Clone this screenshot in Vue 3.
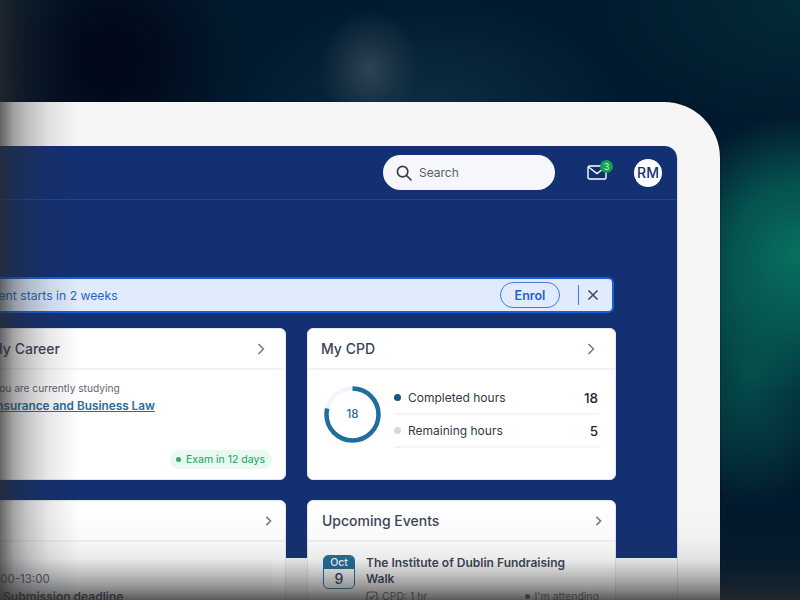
<script setup>
const cpdRows = [
  { label: 'Completed hours', value: 18, kind: 'done' },
  { label: 'Remaining hours', value: 5, kind: 'left' }
]

const ringLength = 2 * Math.PI * 26
const ringDash = `${ringLength * (18 / 23)} ${ringLength}`
</script>

<template>
  <div class="scene">
    <div class="tablet">
      <div class="screen">
        <header class="topbar">
          <div class="search">
            <svg class="search__icon" viewBox="0 0 16 16" width="16" height="16" aria-hidden="true">
              <circle cx="6.6" cy="6.6" r="5.2" />
              <path d="M10.5 10.5 15 15" />
            </svg>
            <span>Search</span>
          </div>
          <div class="mail">
            <svg viewBox="0 0 20 15" width="20" height="15" aria-hidden="true">
              <rect x="1" y="1" width="18" height="13" rx="1.5" />
              <path d="M1.5 2 10 8.5 18.5 2" />
            </svg>
            <span class="mail__badge">3</span>
          </div>
          <div class="avatar">RM</div>
        </header>

        <main class="content">
          <div class="banner">
            <span class="banner__text">Your enrolment starts in 2 weeks</span>
            <button class="banner__btn" type="button">Enrol</button>
            <span class="banner__sep"></span>
            <svg class="banner__close" viewBox="0 0 12 12" width="12" height="12" aria-hidden="true">
              <path d="M1.5 1.5 10.5 10.5M10.5 1.5 1.5 10.5" />
            </svg>
          </div>

          <div class="cards">
            <section class="card">
              <header class="card__head">
                <h2>My Career</h2>
                <svg class="chev" viewBox="0 0 8 12" width="8" height="12" aria-hidden="true"><path d="M1.5 1 6.5 6 1.5 11" /></svg>
              </header>
              <div class="career">
                <p class="career__note">You are currently studying</p>
                <a class="career__link">Insurance and Business Law</a>
                <span class="pill"><i></i>Exam in 12 days</span>
              </div>
            </section>

            <section class="card">
              <header class="card__head">
                <h2>My CPD</h2>
                <svg class="chev" viewBox="0 0 8 12" width="8" height="12" aria-hidden="true"><path d="M1.5 1 6.5 6 1.5 11" /></svg>
              </header>
              <div class="cpd">
                <div class="ring">
                  <svg viewBox="0 0 57 57" width="57" height="57" aria-hidden="true">
                    <circle class="ring__track" cx="28.5" cy="28.5" r="26" />
                    <circle class="ring__value" cx="28.5" cy="28.5" r="26" :stroke-dasharray="ringDash" />
                  </svg>
                  <span>18</span>
                </div>
                <ul class="cpd__list">
                  <li v-for="row in cpdRows" :key="row.label">
                    <i :class="row.kind"></i>
                    <span class="cpd__label">{{ row.label }}</span>
                    <b>{{ row.value }}</b>
                  </li>
                </ul>
              </div>
            </section>

            <section class="card card--lower">
              <header class="card__head card__head--end">
                <svg class="chev" viewBox="0 0 8 12" width="8" height="12" aria-hidden="true"><path d="M1.5 1 6.5 6 1.5 11" /></svg>
              </header>
              <div class="deadline">
                <p class="deadline__time">10:00-13:00</p>
                <p class="deadline__name">Submission deadline</p>
              </div>
            </section>

            <section class="card card--lower">
              <header class="card__head">
                <h2>Upcoming Events</h2>
                <svg class="chev" viewBox="0 0 8 12" width="8" height="12" aria-hidden="true"><path d="M1.5 1 6.5 6 1.5 11" /></svg>
              </header>
              <div class="event">
                <div class="date">
                  <span class="date__month">Oct</span>
                  <span class="date__day">9</span>
                </div>
                <div class="event__body">
                  <p class="event__title">The Institute of Dublin Fundraising Walk</p>
                  <div class="event__meta">
                    <span class="event__cpd">
                      <svg viewBox="0 0 12 12" width="12" height="12" aria-hidden="true">
                        <rect x="1" y="1" width="10" height="10" rx="2.5" />
                        <path d="M3.5 6 5.4 7.8 8.6 4.2" />
                      </svg>
                      CPD: 1 hr
                    </span>
                    <span class="event__going"><i></i>I'm attending</span>
                  </div>
                </div>
              </div>
            </section>
          </div>
        </main>
      </div>
    </div>

    <div class="fade fade--left" aria-hidden="true"></div>
    <div class="fade fade--bottom" aria-hidden="true"></div>
  </div>
</template>

<style>
html,
body {
  margin: 0;
  background: #021a2b;
}
</style>

<style scoped>
* {
  box-sizing: border-box;
}

.scene {
  position: relative;
  width: 800px;
  height: 600px;
  padding-top: 102px;
  overflow: hidden;
  font-family: Inter, 'Liberation Sans', sans-serif;
  background:
    radial-gradient(ellipse 50px 60px at 370px 70px, rgba(56, 74, 90, 0.8), rgba(45, 65, 82, 0.4) 55%, transparent 100%),
    radial-gradient(ellipse 190px 110px at 430px 110px, rgba(24, 62, 82, 0.55), transparent 100%),
    radial-gradient(ellipse 130px 140px at 795px 255px, #08705f 0%, rgba(6, 100, 90, 0.75) 50%, transparent 100%),
    radial-gradient(ellipse 95px 130px at 750px 375px, rgba(5, 85, 80, 0.85) 0%, rgba(5, 85, 80, 0.4) 60%, transparent 100%),
    radial-gradient(ellipse 130px 130px at 110px 60px, #01091a 20%, transparent 100%),
    radial-gradient(ellipse 200px 120px at 800px 0, #032b38 0%, transparent 100%),
    #021a2d;
}

.tablet {
  width: 840px;
  height: 560px;
  margin-left: -120px;
  padding: 44px 42px 0 40px;
  border-radius: 0 56px 0 0;
  background: #f6f6f7;
  box-shadow: 0 0 2px rgba(0, 0, 0, 0.5);
}

.screen {
  height: 100%;
  border-right: 1px solid #d9dde8;
  border-radius: 0 13px 0 0;
  background: linear-gradient(#133072 412px, transparent 412px);
}

.topbar {
  display: flex;
  align-items: center;
  justify-content: flex-end;
  height: 54px;
  padding-right: 15px;
  border-bottom: 1px solid #1d4595;
}

.search {
  display: flex;
  align-items: center;
  gap: 7px;
  width: 172px;
  height: 35px;
  margin-right: 32px;
  padding-left: 13px;
  border-radius: 18px;
  background: #f6f7fa;
  color: #555e6e;
  font-size: 12px;
  line-height: 14px;
}

.search__icon {
  fill: none;
  stroke: #3a3f48;
  stroke-width: 1.7;
  stroke-linecap: round;
}

.mail {
  position: relative;
  display: flex;
  width: 20px;
  margin-right: 27px;
}

.mail svg {
  fill: none;
  stroke: #fff;
  stroke-width: 1.4;
}

.mail__badge {
  position: absolute;
  top: -5px;
  right: -6px;
  width: 13px;
  height: 13px;
  border-radius: 50%;
  background: #12a150;
  color: #d8f5e4;
  font-size: 9px;
  line-height: 13px;
  text-align: center;
}

.avatar {
  width: 28px;
  height: 28px;
  border-radius: 50%;
  background: #fff;
  color: #133072;
  font-size: 14px;
  font-weight: 500;
  line-height: 28px;
  text-align: center;
}

.content {
  padding: 77px 61px 0 56px;
}

.banner {
  display: flex;
  align-items: center;
  height: 36px;
  margin: 0 2px 15px -51px;
  padding-right: 13px;
  border: 2px solid #1a5fd6;
  border-radius: 6px;
  background: #e1ebfd;
  color: #2563c4;
  font-size: 12.2px;
}

.banner__text {
  flex: 1;
  padding-left: 2px;
}

.banner__btn {
  width: 60px;
  height: 26px;
  padding: 0;
  border: 1px solid #3b7de0;
  border-radius: 13px;
  background: transparent;
  color: #2563c4;
  font: 600 12.5px Inter, 'Liberation Sans', sans-serif;
}

.banner__sep {
  width: 1px;
  height: 20px;
  margin: 0 8px 0 18px;
  background: #3b7de0;
}

.banner__close {
  fill: none;
  stroke: #434b5a;
  stroke-width: 1.6;
}

.cards {
  display: grid;
  grid-template-columns: 310px 309px;
  grid-auto-rows: 152px;
  gap: 20px 21px;
}

.card {
  border: 1px solid #e3e7f0;
  border-radius: 6px;
  background: #fff;
}

.card__head {
  display: flex;
  align-items: center;
  justify-content: space-between;
  height: 41px;
  padding: 0 20px 0 13px;
  border-bottom: 2px solid #f1f3f9;
}

.card__head--end {
  justify-content: flex-end;
}

.card__head h2 {
  margin: 0;
  color: #3b4557;
  font-size: 14px;
  font-weight: 500;
}

.card--lower .card__head {
  padding: 0 13px 0 14px;
}

.chev {
  fill: none;
  stroke: #6f7a8e;
  stroke-width: 1.5;
}

.card--lower .chev {
  width: 7px;
  height: 10px;
  stroke-width: 1.9;
}

.career {
  display: flex;
  flex-direction: column;
  padding: 11px 13px 0 16px;
}

.career__note {
  margin: 0 0 3px;
  color: #5d6675;
  font-size: 10.2px;
  line-height: 14px;
}

.career__link {
  align-self: flex-start;
  color: #2a6d98;
  font-size: 11.8px;
  font-weight: 600;
  line-height: 16px;
  text-decoration: underline;
  text-decoration-thickness: 1px;
}

.pill {
  display: flex;
  align-items: center;
  align-self: flex-end;
  gap: 5px;
  height: 19px;
  margin-top: 36px;
  padding: 0 7px 0 6px;
  border-radius: 10px;
  background: #e8f9f0;
  color: #1f9d61;
  font-size: 10.5px;
}

.pill i {
  width: 5px;
  height: 5px;
  border-radius: 50%;
  background: #1fb56b;
}

.cpd {
  display: flex;
  gap: 13px;
  padding: 16px 16px 0 16px;
}

.ring {
  position: relative;
  flex: none;
  width: 57px;
  height: 57px;
}

.ring svg {
  display: block;
  transform: rotate(-90deg);
  fill: none;
  stroke-width: 4.5;
}

.ring__track {
  stroke: #f2f5fb;
}

.ring__value {
  stroke: #1f6f9c;
}

.ring span {
  position: absolute;
  inset: 0;
  color: #2b6a94;
  font-size: 11.5px;
  font-weight: 500;
  line-height: 57px;
  text-align: center;
}

.cpd__list {
  flex: 1;
  margin: -4px 0 0;
  padding: 0;
  list-style: none;
}

.cpd__list li {
  display: flex;
  align-items: center;
  height: 33px;
  border-bottom: 2px solid #f3f5fa;
  color: #303947;
  font-size: 12px;
}

.cpd__list i {
  width: 7px;
  height: 7px;
  margin-right: 7px;
  border-radius: 50%;
}

.cpd__list i.done {
  background: #1b557e;
}

.cpd__list i.left {
  background: #d3d7e2;
}

.cpd__label {
  flex: 1;
}

.cpd__list b {
  padding-right: 1px;
  color: #1f2733;
  font-size: 13.5px;
  font-weight: 500;
}

.deadline {
  margin: 18px 13px 0 0;
  padding: 12px 0 0 8px;
  background: #fafbfc;
}

.deadline__time {
  margin: 0 0 3px;
  color: #5d6675;
  font-size: 11.5px;
}

.deadline__name {
  margin: 0 0 0 18px;
  color: #3b4557;
  font-size: 12px;
  font-weight: 600;
}

.event {
  display: flex;
  gap: 11px;
  padding: 13px 16px 0 15px;
}

.date {
  display: flex;
  flex: none;
  flex-direction: column;
  width: 32px;
  height: 34px;
  overflow: hidden;
  border: 1px solid #1f6f9c;
  border-radius: 5px;
  text-align: center;
}

.date__month {
  height: 14px;
  background: #1f6f9c;
  color: #fff;
  font-size: 10.5px;
  font-weight: 500;
  line-height: 13px;
}

.date__day {
  color: #1f3a58;
  font-size: 14px;
  font-weight: 500;
  line-height: 19px;
}

.event__body {
  flex: 1;
}

.event__title {
  max-width: 210px;
  margin: 0;
  color: #3b4557;
  font-size: 12px;
  font-weight: 600;
  line-height: 15.5px;
}

.event__meta {
  display: flex;
  justify-content: space-between;
  margin-top: 4px;
  color: #5d6675;
  font-size: 10.5px;
}

.event__cpd {
  display: flex;
  align-items: center;
  gap: 4px;
}

.event__cpd svg {
  fill: none;
  stroke: #5d6675;
  stroke-width: 1.2;
}

.event__going {
  display: flex;
  align-items: center;
  gap: 5px;
}

.event__going i {
  width: 5px;
  height: 5px;
  border-radius: 50%;
  background: #1f6f9c;
}

.fade {
  position: absolute;
  pointer-events: none;
}

.fade--left {
  top: 0;
  bottom: 0;
  left: 0;
  width: 80px;
  background: linear-gradient(90deg, rgba(42, 42, 44, 0.72) 0, rgba(42, 42, 44, 0.42) 14px, rgba(42, 42, 44, 0.26) 28px, rgba(42, 42, 44, 0.1) 50px, rgba(42, 42, 44, 0) 80px);
}

.fade--bottom {
  right: 0;
  bottom: 0;
  left: 0;
  height: 90px;
  background: linear-gradient(180deg, rgba(42, 42, 44, 0) 0, rgba(42, 42, 44, 0.03) 30px, rgba(42, 42, 44, 0.1) 50px, rgba(42, 42, 44, 0.3) 65px, rgba(42, 42, 44, 0.55) 80px, rgba(42, 42, 44, 0.78) 90px);
}
</style>
